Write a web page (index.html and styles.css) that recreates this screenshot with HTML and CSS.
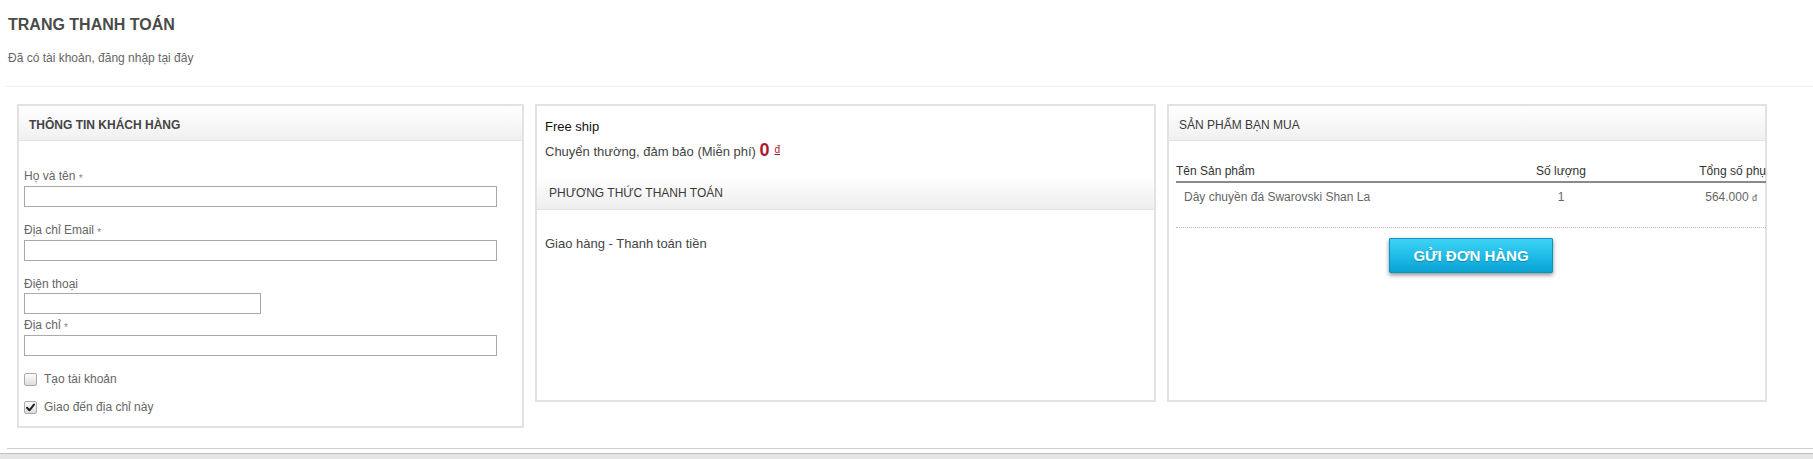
FILE: index.html
```html
<!DOCTYPE html>
<html lang="vi">
<head>
<meta charset="utf-8">
<title>Trang thanh toán</title>
<link rel="stylesheet" href="styles.css">
</head>
<body>
<div class="page-head">
  <h1 class="title">TRANG THANH TOÁN</h1>
  <p class="sub">Đã có tài khoản, đăng nhập tại đây</p>
</div>
<div class="panel">
  <div class="cols">
    <section class="box box-left">
      <div class="box-head bold">THÔNG TIN KHÁCH HÀNG</div>
      <div class="form">
        <div class="field">
          <label class="lbl">Họ và tên <span class="req">*</span></label>
          <input class="inp" type="text">
        </div>
        <div class="field">
          <label class="lbl">Địa chỉ Email <span class="req">*</span></label>
          <input class="inp" type="text">
        </div>
        <div class="field tight">
          <label class="lbl">Điện thoại</label>
          <input class="inp inp-half" type="text">
        </div>
        <div class="field last">
          <label class="lbl">Địa chỉ <span class="req">*</span></label>
          <input class="inp" type="text">
        </div>
        <div class="check-row"><span class="cb"></span><span class="cb-text">Tạo tài khoản</span></div>
        <div class="check-row second"><span class="cb"><svg viewBox="0 0 13 13" width="13" height="13"><path d="M3 6.8 L5.4 9.3 L10 3.6" fill="none" stroke="#1e1e1e" stroke-width="2" stroke-linecap="round" stroke-linejoin="round"/></svg></span><span class="cb-text">Giao đến địa chỉ này</span></div>
      </div>
    </section>

    <section class="box box-mid">
      <div class="ship">
        <div class="ship-title">Free ship</div>
        <div class="ship-line">Chuyển thường, đảm bảo (Miễn phí) <span class="zero">0</span><span class="cur">đ</span></div>
      </div>
      <div class="box-head sub-head">PHƯƠNG THỨC THANH TOÁN</div>
      <div class="pay">Giao hàng - Thanh toán tiền</div>
    </section>

    <section class="box box-right">
      <div class="box-head">SẢN PHẨM BẠN MUA</div>
      <div class="cart">
        <div class="cart-row cart-headrow">
          <div class="c1">Tên Sản phẩm</div>
          <div class="c2">Số lượng</div>
          <div class="c3">Tổng số phụ</div>
        </div>
        <div class="cart-row cart-item">
          <div class="c1">Dây chuyền đá Swarovski Shan La</div>
          <div class="c2">1</div>
          <div class="c3">564.000 <span class="small-cur">đ</span></div>
        </div>
        <div class="btn-wrap"><button class="send">GỬI ĐƠN HÀNG</button></div>
      </div>
    </section>
  </div>
</div>
<div class="divider"></div>
<div class="footer"></div>
</body>
</html>
```

FILE: styles.css
```css
html, body {
  margin: 0;
  padding: 0;
  background: #fff;
  font-family: "Liberation Sans", Arial, sans-serif;
}

.page-head {
  padding: 15px 0 0 8px;
}

.title {
  margin: 0;
  font-size: 16px;
  line-height: 20px;
  font-weight: bold;
  color: #4a4a4a;
}

.sub {
  margin: 16px 0 0;
  font-size: 12px;
  line-height: 14px;
  color: #666;
}

.panel {
  margin: 21px 0 0 5px;
  border-top: 1px solid #f3f3f3;
  padding: 17px 0 0 12px;
}

.cols {
  display: flex;
  align-items: flex-start;
  gap: 11px;
}

.box {
  box-sizing: border-box;
  border: 2px solid #e2e2e2;
  background: #fff;
}

.box-left { width: 507px; }
.box-mid { width: 621px; height: 298px; }
.box-right { width: 600px; height: 298px; }

.box-head {
  box-sizing: border-box;
  height: 35px;
  padding: 12px 10px 0;
  font-size: 12px;
  line-height: 14px;
  color: #3a3a3a;
  background: linear-gradient(#ffffff, #f0f0f0);
  border-bottom: 1px solid #e3e3e3;
}

.box-head.bold { font-weight: bold; color: #444; }

.form {
  padding: 28px 25px 12px 5px;
}

.field { margin-bottom: 16px; }
.field.tight { margin-bottom: 4px; }
.field.last { margin-bottom: 16px; }

.lbl {
  display: block;
  font-size: 12px;
  line-height: 14px;
  color: #666;
  margin-bottom: 2px;
}

.req {
  font-size: 10px;
  color: #888;
  position: relative;
  top: 2px;
}

.inp {
  display: block;
  box-sizing: border-box;
  width: 473px;
  height: 21px;
  margin: 0;
  border: 1px solid #a9a9a9;
  background: #fff;
  padding: 0 4px;
}

.inp-half { width: 237px; }

.check-row {
  display: flex;
  align-items: center;
  height: 14px;
}

.check-row.second { margin-top: 14px; }

.cb {
  box-sizing: border-box;
  width: 13px;
  height: 13px;
  border: 1px solid #aaa;
  border-radius: 2px;
  background: linear-gradient(#fdfdfd, #dcdcdc);
  display: flex;
  align-items: center;
  justify-content: center;
  overflow: hidden;
}

.cb svg { display: block; flex: none; }

.cb-text {
  margin-left: 7px;
  font-size: 12px;
  line-height: 14px;
  color: #666;
}

.ship {
  padding: 13px 8px 0;
}

.ship-title {
  font-size: 13px;
  line-height: 16px;
  color: #111;
}

.ship-line {
  margin-top: 7px;
  font-size: 13px;
  line-height: 16px;
  color: #444;
}

.zero {
  font-size: 18px;
  font-weight: bold;
  color: #a61a2d;
}

.cur {
  margin-left: 5px;
  font-size: 10px;
  color: #a61a2d;
  text-decoration: underline;
  vertical-align: 3px;
}

.sub-head {
  margin-top: 17px;
  height: 33px;
  padding: 9px 12px 0;
  background: linear-gradient(#ffffff, #eeeeee);
}

.pay {
  margin-top: 26px;
  padding-left: 8px;
  font-size: 13px;
  line-height: 16px;
  color: #444;
}

.cart {
  width: 590px;
  margin-left: 7px;
  padding-top: 23px;
}

.cart-row {
  display: grid;
  grid-template-columns: 324px 122px 1fr;
  font-size: 12px;
  line-height: 14px;
}

.cart-headrow {
  color: #333;
  padding-bottom: 3px;
  border-bottom: 2px solid #8a8a8a;
}

.cart-item {
  color: #666;
  padding: 7px 9px 22px 8px;
  grid-template-columns: 316px 122px 1fr;
  border-bottom: 1px dotted #bdbdbd;
}

.c2 { text-align: center; }
.c3 { text-align: right; }

.small-cur { font-size: 9px; }

.btn-wrap {
  display: flex;
  justify-content: center;
  margin-top: 10px;
}

.send {
  width: 164px;
  height: 35px;
  border: 1px solid #0b93c3;
  border-radius: 1px;
  background: linear-gradient(#3fd3f4 0%, #1fbde8 50%, #0aa2d3 100%);
  box-shadow: 0 2px 4px rgba(0, 0, 0, 0.45);
  color: #fff;
  font-family: "Liberation Sans", Arial, sans-serif;
  font-size: 15px;
  font-weight: bold;
  text-shadow: 0 1px 1px rgba(0, 60, 90, 0.35);
  padding: 0;
}

.divider {
  margin: 20px 0 0 7px;
  border-top: 1px solid #cfcfcf;
}

.footer {
  margin-top: 4px;
  border-top: 1px solid #c2c2c2;
  height: 20px;
  background: #e5e5e5;
}
```
